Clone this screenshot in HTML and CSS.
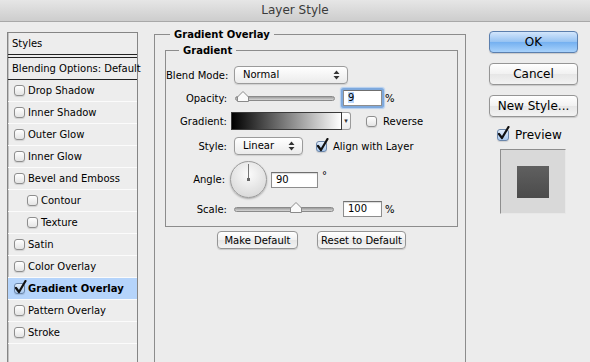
FILE: index.html
```html
<!DOCTYPE html>
<html lang="en">
<head>
    <title>Layer Style</title>
    <link rel="stylesheet" href="styles.css">
</head>
<body>
    <div class="titlebar">Layer Style</div>

    <div class="dialog">
        <div class="styles-list">
            <div class="list-head">Styles</div>
            <div class="list-blend">Blending Options: Default</div>
            <ul class="effects">
                <li><span class="check"></span>Drop Shadow</li>
                <li><span class="check"></span>Inner Shadow</li>
                <li><span class="check"></span>Outer Glow</li>
                <li><span class="check"></span>Inner Glow</li>
                <li><span class="check"></span>Bevel and Emboss</li>
                <li class="sub"><span class="check"></span>Contour</li>
                <li class="sub"><span class="check"></span>Texture</li>
                <li><span class="check"></span>Satin</li>
                <li><span class="check"></span>Color Overlay</li>
                <li class="selected"><span class="check checked"><svg class="tick" width="13" height="14" viewBox="0 0 13 14"><path d="M2 8 L5 12 L11.5 1" /></svg></span>Gradient Overlay</li>
                <li><span class="check"></span>Pattern Overlay</li>
                <li><span class="check"></span>Stroke</li>
            </ul>
        </div>

        <fieldset class="group">
            <legend>Gradient Overlay</legend>

            <fieldset class="subgroup">
                <legend>Gradient</legend>

                <div class="row row-blend">
                    <label>Blend Mode:</label>
                    <div class="select select-blend">Normal
                        <svg class="updown" width="7" height="10" viewBox="0 0 7 10"><path d="M3.5 0.5 L6.5 4 H0.5 Z M3.5 9.5 L6.5 6 H0.5 Z" /></svg>
                    </div>
                </div>

                <div class="row row-opacity">
                    <label>Opacity:</label>
                    <div class="slider">
                        <div class="track"></div>
                        <svg class="thumb" style="left: 2px" width="12" height="11" viewBox="0 0 12 11"><path d="M0.5 10.5 V6 L6 0.5 L11.5 6 V10.5 Z" /></svg>
                    </div>
                    <div class="field field-focus"><span class="sel">9</span></div>
                    <span class="unit">%</span>
                </div>

                <div class="row row-gradient">
                    <label>Gradient:</label>
                    <div class="gradient-pick">
                        <div class="swatch"></div>
                        <div class="drop">&#9662;</div>
                    </div>
                    <span class="check check-reverse"></span>
                    <span class="check-text">Reverse</span>
                </div>

                <div class="row row-style">
                    <label>Style:</label>
                    <div class="select select-style">Linear
                        <svg class="updown" width="7" height="10" viewBox="0 0 7 10"><path d="M3.5 0.5 L6.5 4 H0.5 Z M3.5 9.5 L6.5 6 H0.5 Z" /></svg>
                    </div>
                    <span class="check checked check-align"><svg class="tick" width="13" height="14" viewBox="0 0 13 14"><path d="M2 8 L5 12 L11.5 1" /></svg></span>
                    <span class="check-text">Align with Layer</span>
                </div>

                <div class="row row-angle">
                    <label>Angle:</label>
                    <div class="dial"><div class="dial-hand"></div><div class="dial-dot"></div></div>
                    <div class="field field-angle">90</div>
                    <span class="degree">&deg;</span>
                </div>

                <div class="row row-scale">
                    <label>Scale:</label>
                    <div class="slider">
                        <div class="track"></div>
                        <svg class="thumb" style="left: 56px" width="12" height="11" viewBox="0 0 12 11"><path d="M0.5 10.5 V6 L6 0.5 L11.5 6 V10.5 Z" /></svg>
                    </div>
                    <div class="field field-scale">100</div>
                    <span class="unit">%</span>
                </div>
            </fieldset>

            <div class="defaults">
                <button class="small btn-make">Make Default</button>
                <button class="small btn-reset">Reset to Default</button>
            </div>
        </fieldset>

        <div class="actions">
            <button class="big primary">OK</button>
            <button class="big">Cancel</button>
            <button class="big">New Style...</button>
            <div class="preview-check">
                <span class="check checked check-preview"><svg class="tick" width="13" height="14" viewBox="0 0 13 14"><path d="M2 8 L5 12 L11.5 1" /></svg></span>
                <span>Preview</span>
            </div>
            <div class="preview">
                <div class="preview-swatch"></div>
            </div>
        </div>
    </div>
</body>
</html>
```

FILE: styles.css
```css
html, body {
    margin: 0;
    padding: 0;
}

body {
    width: 590px;
    height: 362px;
    overflow: hidden;
    background-color: #ececec;
    font-family: "DejaVu Sans", "Liberation Sans", sans-serif;
    font-size: 10px;
    color: #000;
    white-space: nowrap;
}

.titlebar {
    height: 21px;
    line-height: 21px;
    text-align: center;
    font-size: 12px;
    color: #3a3a3a;
    background: linear-gradient(#e6e6e6, #cdcdcd);
    border-bottom: 1px solid #a8a8a8;
}

.dialog {
    display: flex;
    align-items: flex-start;
    padding: 10px 0 0 7px;
}

/* left list of effects */

.styles-list {
    flex: none;
    box-sizing: border-box;
    width: 131px;
    height: 340px;
    border: 1px solid #858585;
    box-shadow: inset 1px 0 0 #c2c2c2;
    background-color: #ededed;
}

.list-head,
.list-blend {
    height: 21px;
    line-height: 21px;
    padding-left: 4px;
}

.list-head {
    border-bottom: 1px solid #222;
}

.list-blend {
    margin-top: 2px;
    border-top: 1px solid #222;
    border-bottom: 1px solid #222;
}

.effects {
    list-style: none;
    margin: 0;
    padding: 0;
}

.effects li {
    display: flex;
    align-items: center;
    height: 21px;
    padding-left: 6px;
    border-bottom: 1px solid #fbfbfb;
}

.effects li.sub {
    padding-left: 19px;
}

.effects li.selected {
    background-color: #b5d4fb;
    font-weight: bold;
}

.effects .check {
    margin-right: 3px;
}

/* checkboxes */

.check {
    position: relative;
    flex: none;
    display: inline-block;
    box-sizing: border-box;
    width: 11px;
    height: 11px;
    border: 1px solid #8e8e8e;
    border-radius: 3px;
    background: linear-gradient(#ffffff, #e4e4e4);
    box-shadow: 0 1px 1px rgba(0, 0, 0, 0.12);
}

.check.checked {
    border-color: #6b86aa;
    background: linear-gradient(#e3eefb, #a9c9ef);
}

.tick {
    position: absolute;
    left: -1px;
    top: -4px;
}

.tick path {
    fill: none;
    stroke: #111;
    stroke-width: 2.2;
    stroke-linecap: round;
    stroke-linejoin: round;
}

.check-text {
    margin-left: 6px;
}

/* group boxes */

.group {
    flex: none;
    box-sizing: border-box;
    width: 312px;
    height: 340px;
    margin: -3px 0 0 16px;
    padding: 0;
    min-width: 0;
    border: 1px solid #8c8c8c;
}

.group > legend {
    margin-left: 15px;
    padding: 0 4px;
    font-weight: bold;
}

.subgroup {
    box-sizing: border-box;
    width: 293px;
    margin: 5px 0 0 10px;
    padding: 0 0 9px 0;
    min-width: 0;
    border: 1px solid #8c8c8c;
}

.subgroup > legend {
    margin-left: 13px;
    padding: 0 4px;
    font-weight: bold;
}

.row {
    display: flex;
    align-items: center;
    height: 18px;
    margin-top: 6px;
}

.row label {
    flex: none;
    width: 61px;
    text-align: right;
}

.row-blend {
    margin-top: 10px;
}

.row-opacity {
    height: 16px;
}

.row-style {
    margin-top: 7px;
}

.row-angle {
    height: 37px;
}

.row-angle label {
    width: 59px;
    padding-right: 2px;
}

.row-scale {
    height: 16px;
    margin-top: 3px;
}

/* popup menus */

.select {
    position: relative;
    flex: none;
    box-sizing: border-box;
    height: 18px;
    line-height: 16px;
    padding-left: 8px;
    border: 1px solid #9b9b9b;
    border-radius: 4px;
    background: linear-gradient(#ffffff, #ebebeb);
    box-shadow: 0 1px 1px rgba(0, 0, 0, 0.12);
}

.select-blend {
    width: 114px;
    margin-left: 7px;
}

.select-style {
    width: 69px;
    margin-left: 7px;
}

.updown {
    position: absolute;
    right: 7px;
    top: 3px;
}

.updown path {
    fill: #333;
}

/* sliders */

.slider {
    position: relative;
    flex: none;
    width: 100px;
    height: 16px;
}

.row-opacity .slider {
    margin-left: 8px;
}

.row-scale .slider {
    margin-left: 7px;
}

.track {
    box-sizing: border-box;
    height: 5px;
    margin-top: 6px;
    border: 1px solid #8a8a8a;
    border-radius: 3px;
    background: linear-gradient(#9c9c9c, #d6d6d6);
}

.thumb {
    position: absolute;
    top: 1px;
}

.thumb path {
    fill: #fafafa;
    stroke: #8a8a8a;
}

/* text fields */

.field {
    flex: none;
    box-sizing: border-box;
    height: 16px;
    line-height: 14px;
    padding-left: 4px;
    border: 1px solid #8d8d8d;
    border-top-color: #6f6f6f;
    background-color: #fff;
    box-shadow: inset 0 1px 1px rgba(0, 0, 0, 0.15);
}

.field-focus {
    width: 39px;
    margin-left: 8px;
    box-shadow: 0 0 0 2px #7ea9dd, 0 0 1px 3px #b4cff0;
    border-radius: 1px;
}

.sel {
    background-color: #b6d5fc;
}

.field-angle {
    width: 47px;
    margin-left: 4px;
}

.field-scale {
    width: 39px;
    margin-left: 9px;
}

.unit {
    margin-left: 3px;
}

.degree {
    align-self: flex-start;
    margin: 9px 0 0 4px;
}

/* gradient picker */

.gradient-pick {
    flex: none;
    display: flex;
    height: 18px;
    margin-left: 4px;
}

.swatch {
    box-sizing: border-box;
    width: 111px;
    border: 1px solid #3a3a3a;
    background: linear-gradient(to right, #000, #fff);
}

.drop {
    box-sizing: border-box;
    width: 9px;
    line-height: 16px;
    text-align: center;
    font-size: 7px;
    color: #333;
    border: 1px solid #9b9b9b;
    border-left: none;
    border-radius: 0 3px 3px 0;
    background: linear-gradient(#ffffff, #ebebeb);
}

.check-reverse {
    margin-left: 15px;
}

.check-align {
    margin-left: 13px;
}

/* angle dial */

.dial {
    position: relative;
    flex: none;
    box-sizing: border-box;
    width: 37px;
    height: 37px;
    margin-left: 3px;
    border: 1px solid #9a9a9a;
    border-radius: 50%;
    background: radial-gradient(circle at 50% 35%, #fbfbfb, #dedede 70%, #cfcfcf);
    box-shadow: 0 1px 2px rgba(0, 0, 0, 0.3);
}

.dial-hand {
    position: absolute;
    left: 17px;
    top: 2px;
    width: 1px;
    height: 16px;
    background-color: #777;
}

.dial-dot {
    position: absolute;
    left: 16px;
    top: 16px;
    width: 3px;
    height: 3px;
    background-color: #666;
}

/* buttons */

button {
    box-sizing: border-box;
    padding: 0;
    font-family: "DejaVu Sans", "Liberation Sans", sans-serif;
    color: #000;
    white-space: nowrap;
    border: 1px solid #959595;
    border-radius: 4px;
    background: linear-gradient(#ffffff, #f1f1f1 50%, #e6e6e6 51%, #f3f3f3);
    box-shadow: 0 1px 1px rgba(0, 0, 0, 0.15);
    cursor: pointer;
}

.defaults {
    display: flex;
    gap: 19px;
    margin: 4px 0 0 62px;
}

.small {
    height: 18px;
    font-size: 10px;
}

.btn-make {
    width: 81px;
}

.btn-reset {
    width: 89px;
}

.actions {
    flex: none;
    display: flex;
    flex-direction: column;
    width: 89px;
    margin: -1px 0 0 23px;
}

.big {
    height: 22px;
    margin-bottom: 10px;
    font-size: 12px;
}

.primary {
    border-color: #5b7fae;
    background: linear-gradient(#d3e6fc, #95c2f2 50%, #74b0f0 51%, #a8d2fb);
}

.preview-check {
    display: flex;
    align-items: center;
    height: 13px;
    margin: 1px 0 0 8px;
    font-size: 12px;
}

.check-preview {
    width: 12px;
    height: 12px;
    margin-right: 6px;
}

.preview {
    display: flex;
    align-items: center;
    justify-content: center;
    box-sizing: border-box;
    width: 66px;
    height: 65px;
    margin: 8px 0 0 11px;
    border-top: 1px solid #8e8e8e;
    border-left: 1px solid #8e8e8e;
    border-right: 1px solid #e8e8e8;
    border-bottom: 1px solid #e8e8e8;
    background-color: #d9d9d9;
}

.preview-swatch {
    width: 32px;
    height: 32px;
    background: linear-gradient(#606060, #4b4b4b);
}
```
